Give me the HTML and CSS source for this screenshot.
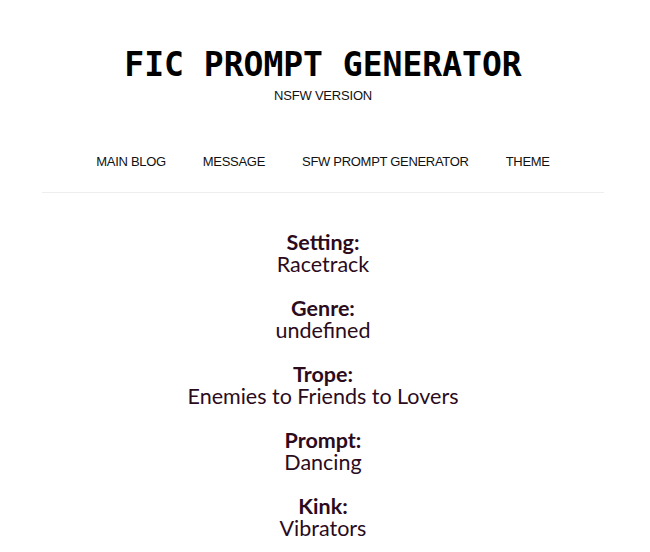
FILE: index.html
```html
<!DOCTYPE html>
<html lang="en">
<head>
    <meta charset="UTF-8">
    <meta name="viewport" content="width=device-width, initial-scale=1.0">
    <title>Fic Prompt Generator</title>
    <link rel="stylesheet" href="styles.css">
</head>
<body>
    <div class="container">
        <header class="header">
            <h1 class="title">FIC PROMPT GENERATOR</h1>
            <p class="subtitle">NSFW VERSION</p>
        </header>

        <nav class="nav">
            <a href="#">MAIN BLOG</a>
            <a href="#">MESSAGE</a>
            <a href="#">SFW PROMPT GENERATOR</a>
            <a href="#">THEME</a>
        </nav>

        <div class="prompts">
            <div class="prompt">
                <div class="label">Setting:</div>
                <div class="value">Racetrack</div>
            </div>
            <div class="prompt">
                <div class="label">Genre:</div>
                <div class="value">undefined</div>
            </div>
            <div class="prompt">
                <div class="label">Trope:</div>
                <div class="value">Enemies to Friends to Lovers</div>
            </div>
            <div class="prompt">
                <div class="label">Prompt:</div>
                <div class="value">Dancing</div>
            </div>
            <div class="prompt">
                <div class="label">Kink:</div>
                <div class="value">Vibrators</div>
            </div>
        </div>
    </div>
</body>
</html>
```

FILE: styles.css
```css
body {
    margin: 0;
    background-color: #fff;
    font-family: "Liberation Sans", Arial, sans-serif;
    color: #111;
}
.container {
    width: 562px;
    margin-left: 42px;
}
.header {
    text-align: center;
    padding-top: 42px;
}
.title {
    margin: 0;
    font-family: "DejaVu Sans Mono", monospace;
    font-size: 33px;
    font-weight: bold;
    line-height: 46px;
    color: #000;
}
.subtitle {
    margin: 0;
    font-size: 13px;
    line-height: 16px;
    letter-spacing: -0.2px;
}
.nav {
    display: flex;
    justify-content: center;
    gap: 37px;
    padding: 49px 0 21px;
    border-bottom: 1px solid #eee;
}
.nav a {
    color: #111;
    text-decoration: none;
    font-size: 13px;
    line-height: 18px;
    letter-spacing: -0.3px;
}
.prompts {
    display: flex;
    flex-direction: column;
    gap: 22px;
    padding-top: 38px;
    text-align: center;
    font-family: Lato, "Open Sans", sans-serif;
    color: #2b0b1c;
}
.label {
    font-weight: bold;
    font-size: 21.5px;
    line-height: 22px;
}
.value {
    font-size: 21.5px;
    line-height: 22px;
}
```
